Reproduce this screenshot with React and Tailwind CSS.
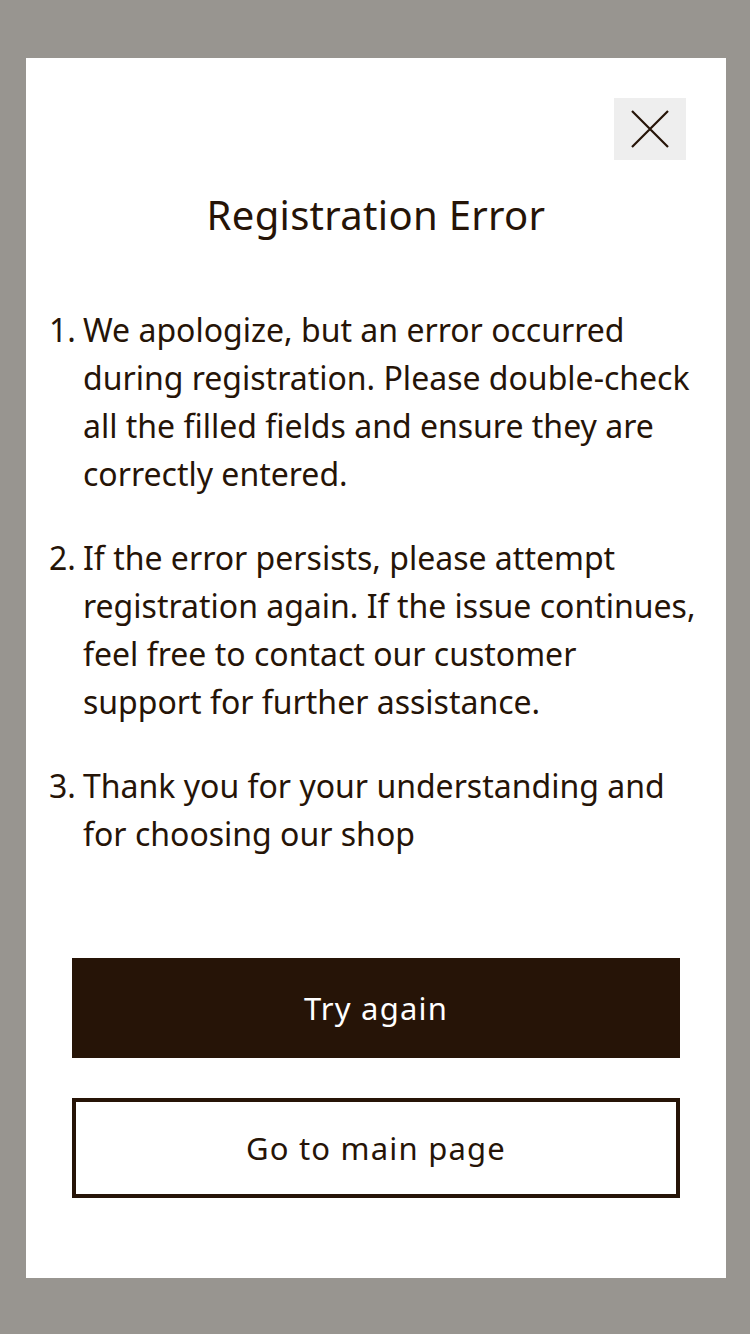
import React from "react";

const items = [
    "We apologize, but an error occurred during registration. Please double-check all the filled fields and ensure they are correctly entered.",
    "If the error persists, please attempt registration again. If the issue continues, feel free to contact our customer support for further assistance.",
    "Thank you for your understanding and for choosing our shop",
];

export default function App() {
    return (
        <div
            className="min-h-[1334px] w-[750px] bg-[#989590] pt-[58px] pb-[56px] pl-[26px] pr-[24px] text-[#261407]"
            style={{ fontFamily: '"Noto Sans", "Open Sans", sans-serif' }}
        >
            <div className="bg-white h-[1220px] flex flex-col">
                <div className="flex justify-end pt-[40px] pr-[40px]">
                    <button className="w-[72px] h-[62px] bg-[#eeeeee] flex items-center justify-center">
                        <svg width="38" height="38" viewBox="0 0 38 38">
                            <path
                                d="M1 1 L37 37 M37 1 L1 37"
                                stroke="#261407"
                                strokeWidth="2.2"
                                fill="none"
                            />
                        </svg>
                    </button>
                </div>

                <h1 className="mt-[27px] text-center text-[40px] leading-[56px] font-normal tracking-[0.3px]">
                    Registration Error
                </h1>

                <ol className="mt-[63px] pl-[23px] pr-[24px] flex flex-col gap-[36px]">
                    {items.map((text, i) => (
                        <li key={i} className="flex text-[32px] leading-[48px]">
                            <span className="w-[34px] shrink-0">{i + 1}.</span>
                            <span>{text}</span>
                        </li>
                    ))}
                </ol>

                <div className="mt-auto mb-[80px] px-[46px] flex flex-col gap-[40px]">
                    <button className="h-[100px] bg-[#261407] text-white text-[31px] tracking-[1.2px]">
                        Try again
                    </button>
                    <button className="h-[100px] bg-white border-4 border-[#261407] text-[31px] tracking-[1.2px]">
                        Go to main page
                    </button>
                </div>
            </div>
        </div>
    );
}
